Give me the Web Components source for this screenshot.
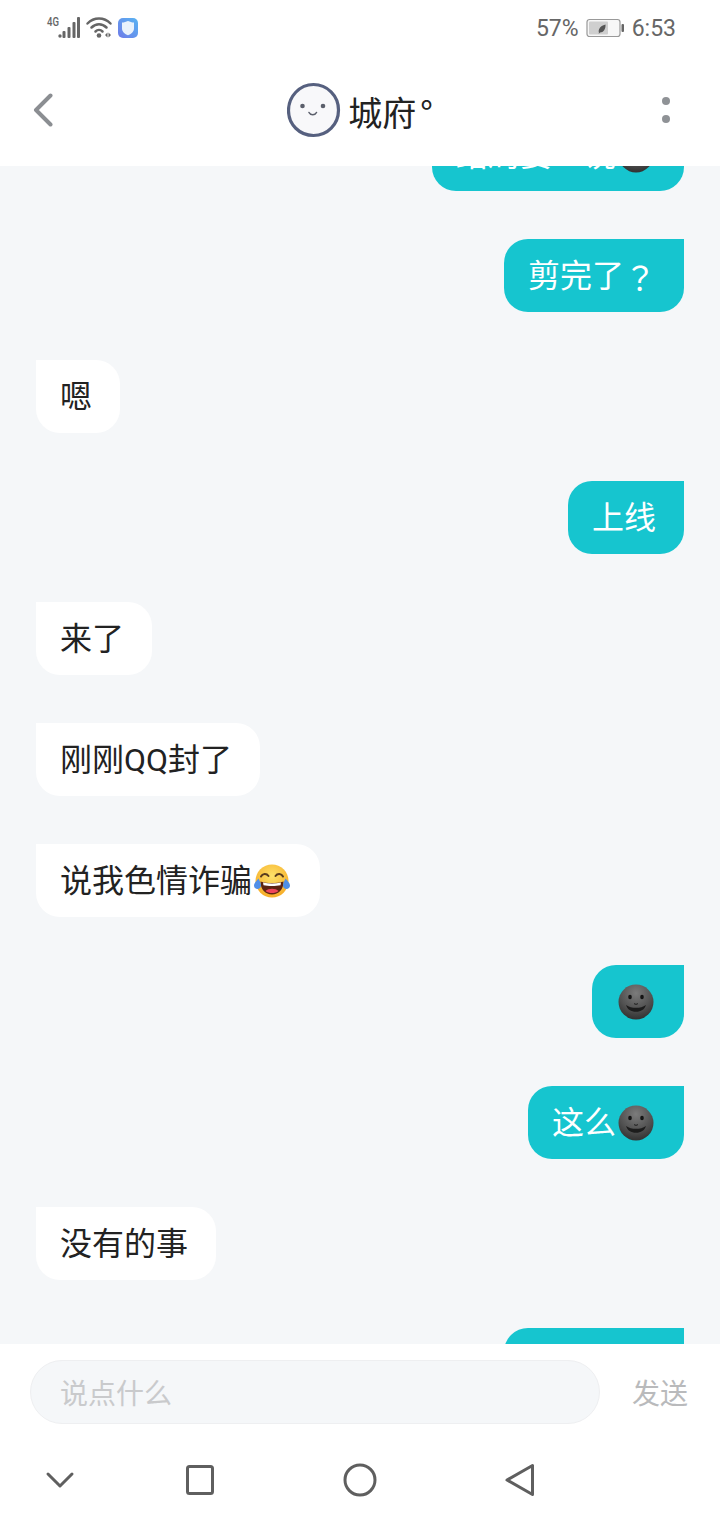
<!DOCTYPE html>
<html lang="zh-CN">
<head>
<meta charset="utf-8">
<title>城府°</title>
<style>
    html, body {
        margin: 0;
        padding: 0;
        height: 100%;
        background: #ffffff;
    }
    body {
        font-family: Roboto, "Noto Sans CJK SC", "Noto Sans", sans-serif;
    }
    chat-app {
        height: 1520px;
    }
    .tc {
        font-family: "Noto Sans CJK TC", sans-serif;
    }
    /* keeps the last bubble its width, its text is behind the input bar */
    .hidden-text {
        width: 128px;
    }
</style>
</head>
<body>

<chat-app>
    <status-bar slot="status"></status-bar>
    <chat-header slot="header" title="城府°"></chat-header>
    <chat-bubble side="me">结局要一说<chat-emoji kind="smile"></chat-emoji></chat-bubble>
    <chat-bubble side="me">剪完了<span class="tc">？</span></chat-bubble>
    <chat-bubble side="them">嗯</chat-bubble>
    <chat-bubble side="me">上线</chat-bubble>
    <chat-bubble side="them">来了</chat-bubble>
    <chat-bubble side="them">刚刚QQ封了</chat-bubble>
    <chat-bubble side="them">说我色情诈骗<chat-emoji kind="joy"></chat-emoji></chat-bubble>
    <chat-bubble side="me"><chat-emoji kind="smile"></chat-emoji></chat-bubble>
    <chat-bubble side="me">这么<chat-emoji kind="smile"></chat-emoji></chat-bubble>
    <chat-bubble side="them">没有的事</chat-bubble>
    <chat-bubble side="me"><span class="hidden-text"></span></chat-bubble>
    <chat-input slot="input"></chat-input>
    <nav-bar slot="nav"></nav-bar>
</chat-app>

<script>
class ChatApp extends HTMLElement {
    constructor() {
        super();
        this.attachShadow({mode: 'open'}).innerHTML = `
        <style>
            :host {
                display: flex;
                flex-direction: column;
                width: 720px;
                background: #ffffff;
                overflow: hidden;
            }
            .messages {
                flex: 1;
                min-height: 0;
                overflow: hidden;
                background: #f5f7f9;
            }
            /* the list is scrolled, first bubble is cut by the header */
            .list {
                display: flex;
                flex-direction: column;
                gap: 48px;
                margin-top: -48px;
            }
        </style>
        <slot name="status"></slot>
        <slot name="header"></slot>
        <div class="messages"><div class="list"><slot></slot></div></div>
        <slot name="input"></slot>
        <slot name="nav"></slot>
        `;
    }
}

class StatusBar extends HTMLElement {
    constructor() {
        super();
        this.attachShadow({mode: 'open'}).innerHTML = `
        <style>
            :host {
                display: flex;
                justify-content: space-between;
                align-items: center;
                height: 56px;
                padding: 0 44px 0 46px;
                color: #666666;
                font-family: Roboto, "Noto Sans", sans-serif;
                font-size: 23px;
            }
            .left, .right {
                display: flex;
                align-items: center;
            }
            svg {
                display: block;
            }
            .pct {
                margin-right: 7px;
            }
            .time {
                margin-left: 8px;
            }
        </style>
        <div class="left">
            <svg width="94" height="32" viewBox="0 -4 94 32">
                <text x="1" y="10" font-family="Roboto, sans-serif" font-size="12.500" font-weight="500" fill="#666" textLength="12" lengthAdjust="spacingAndGlyphs">4G</text>
                <g fill="#666">
                    <circle cx="14" cy="20" r="1.700"/>
                    <rect x="16.500" y="15" width="3" height="7" rx="1"/>
                    <rect x="21.500" y="11" width="3" height="11" rx="1"/>
                    <rect x="26.500" y="6" width="3" height="16" rx="1"/>
                    <rect x="31" y="1" width="3" height="21" rx="1"/>
                </g>
                <g fill="none" stroke="#666" stroke-width="2.500" stroke-linecap="round">
                    <path d="M41.500 7.500C48 .8 58 .8 64.500 7.500"/>
                    <path d="M45.500 11.500C50 7 56 7 60.500 11.500"/>
                    <path d="M49.500 15.500C51.500 13.500 54.500 13.500 56.500 15.500"/>
                </g>
                <circle cx="53" cy="19.500" r="2.300" fill="#666"/>
                <path d="M59 19l2.500-2.500v5zM62.500 16.500L65 19l-2.500 2.500z" fill="#666"/>
                <defs>
                    <linearGradient id="shield-bg" x1="0" y1="1" x2="1" y2="0">
                        <stop offset="0" stop-color="#6e7be8"/>
                        <stop offset="1" stop-color="#59b4f2"/>
                    </linearGradient>
                </defs>
                <rect x="72" y="2" width="20" height="20" rx="5" fill="url(#shield-bg)"/>
                <path d="M76 6.500c2.200 0 4-.6 6-1.500 2 .9 3.800 1.500 6 1.500v6c0 3.500-3 5.600-6 6.800-3-1.200-6-3.300-6-6.800z" fill="#e9f2fc"/>
            </svg>
        </div>
        <div class="right">
            <span class="pct">57%</span>
            <svg width="38" height="20" viewBox="0 0 38 20">
                <rect x="1" y="1.500" width="33" height="17" rx="2.500" fill="#f7f7f7" stroke="#999" stroke-width="1.200"/>
                <rect x="3" y="3.500" width="19" height="13" rx="1" fill="#cfcfcf"/>
                <path d="M13 15c-1-3 .5-7 6.500-8.500.3 4.500-2 8-5.500 8l-1.500 1.500z" fill="#555"/>
                <rect x="35.500" y="6" width="2.500" height="8" rx="1" fill="#666"/>
            </svg>
            <span class="time">6:53</span>
        </div>
        `;
    }
}

class ChatHeader extends HTMLElement {
    constructor() {
        super();
        let title = this.getAttribute('title').replace('°', '<span class="deg">°</span>');
        this.removeAttribute('title');
        this.attachShadow({mode: 'open'}).innerHTML = `
        <style>
            :host {
                display: flex;
                align-items: center;
                justify-content: space-between;
                height: 110px;
                padding: 0 49px 2px 33px;
                background: #ffffff;
                box-sizing: border-box;
            }
            svg {
                display: block;
            }
            .who {
                display: flex;
                align-items: center;
                gap: 7px;
                margin-left: 6px;
            }
            .name {
                font-size: 34px;
                line-height: 54px;
                margin-top: 4px;
                color: #222222;
                font-weight: 400;
                font-family: "Noto Sans CJK SC", sans-serif;
            }
            .deg {
                padding-left: 4px;
            }
        </style>
        <svg width="20" height="34" viewBox="0 0 20 34">
            <path d="M17.500 2.500L3 17l14.500 14.500" fill="none" stroke="#8b8e92" stroke-width="4" stroke-linecap="round" stroke-linejoin="round"/>
        </svg>
        <div class="who">
            <svg width="54" height="56" viewBox="0 0 54 56">
                <path d="M26.500 2.500C40 2.500 51.500 13.500 51.500 28S40.500 53.500 26.500 53.500 1.500 42.500 1.500 28.500 12.500 2.500 26.500 2.500z" fill="#f8f8fa" stroke="#56607f" stroke-width="3.200"/>
                <circle cx="15.500" cy="24" r="2.300" fill="#5b5f6b"/>
                <circle cx="36" cy="24" r="2.300" fill="#5b5f6b"/>
                <path d="M22 30.500c1.500 3 6 3 7.500 0" fill="none" stroke="#5b5f6b" stroke-width="1.600" stroke-linecap="round"/>
            </svg>
            <span class="name">${title}</span>
        </div>
        <svg width="10" height="28" viewBox="0 0 10 28">
            <circle cx="5" cy="5" r="4" fill="#8f9296"/>
            <circle cx="5" cy="23" r="4" fill="#8f9296"/>
        </svg>
        `;
    }
}

class ChatBubble extends HTMLElement {
    constructor() {
        super();
        let me = this.getAttribute('side') === 'me';
        this.attachShadow({mode: 'open'}).innerHTML = `
        <style>
            :host {
                display: flex;
                justify-content: ${me ? 'flex-end' : 'flex-start'};
                padding: 0 36px;
            }
            .bubble {
                display: flex;
                align-items: center;
                height: 73px;
                padding: 0 28px 0 24px;
                box-sizing: border-box;
                font-size: 32px;
                line-height: 46px;
                white-space: nowrap;
                border-radius: ${me ? '24px 0 24px 24px' : '0 24px 24px 24px'};
                background: ${me ? '#16c5cf' : '#ffffff'};
                color: ${me ? '#ffffff' : '#222222'};
            }
        </style>
        <div class="bubble"><slot></slot></div>
        `;
    }
}

class ChatEmoji extends HTMLElement {
    constructor() {
        super();
        let joy = this.getAttribute('kind') === 'joy';
        let art = joy ? `
            <defs>
                <radialGradient id="joy-face" cx="0.5" cy="0.35" r="0.7">
                    <stop offset="0" stop-color="#fde26a"/>
                    <stop offset="1" stop-color="#f6a821"/>
                </radialGradient>
            </defs>
            <circle cx="20" cy="20" r="16.500" fill="url(#joy-face)"/>
            <path d="M9 15.500c1.500-3 5.500-3.500 7.500-.5M23.500 15c2-3 6-2.500 7.500.5" fill="none" stroke="#5a3c1e" stroke-width="2" stroke-linecap="round"/>
            <path d="M8.500 20.500c7 2 16 2 23 0 0 8-5 13-11.500 13s-11.500-5-11.500-13z" fill="#5d2413"/>
            <path d="M11 21.500c5.500 1.200 12.500 1.200 18 0l-.5 2.800c-5 1-12 1-17 0z" fill="#ffffff"/>
            <path d="M13.500 30c3-3 10-3 13 0-3.500 2.800-9.500 2.800-13 0z" fill="#f0465a"/>
            <path d="M6.500 17.500c-2 2.500-4.500 4.500-4.500 7 0 2 1.600 3.500 3.500 3.500s3.500-1.500 3.500-3.500c0-2.500-1.500-4.500-2.500-7z" fill="#4f8fe8"/>
            <path d="M33.500 17.500c2 2.500 4.500 4.500 4.500 7 0 2-1.600 3.500-3.500 3.500s-3.500-1.500-3.500-3.500c0-2.500 1.500-4.500 2.500-7z" fill="#4f8fe8"/>
        ` : `
            <defs>
                <radialGradient id="dark-face" cx="0.5" cy="0.25" r="0.8">
                    <stop offset="0" stop-color="#7c7c7c"/>
                    <stop offset="0.6" stop-color="#505050"/>
                    <stop offset="1" stop-color="#2c2c2c"/>
                </radialGradient>
            </defs>
            <circle cx="20" cy="20" r="17.500" fill="url(#dark-face)"/>
            <ellipse cx="14" cy="15" rx="1.800" ry="2.300" fill="#141414"/>
            <ellipse cx="26" cy="15" rx="1.800" ry="2.300" fill="#141414"/>
            <path d="M10 23c3 2 6 2.800 10 2.800s7-.8 10-2.800c-1.500 4.500-5 6.800-10 6.800s-8.500-2.300-10-6.800z" fill="#1c1c1c"/>
            <path d="M18 21.500c1 1 3 1 4 0" fill="none" stroke="#1c1c1c" stroke-width="1"/>
        `;
        this.attachShadow({mode: 'open'}).innerHTML = `
        <style>
            :host {
                display: block;
                width: 40px;
                height: 40px;
            }
            svg {
                display: block;
            }
        </style>
        <svg width="40" height="40" viewBox="0 0 40 40">${art}</svg>
        `;
    }
}

class ChatInput extends HTMLElement {
    constructor() {
        super();
        this.attachShadow({mode: 'open'}).innerHTML = `
        <style>
            :host {
                display: flex;
                align-items: center;
                justify-content: space-between;
                height: 96px;
                padding: 0 32px 0 30px;
                background: #ffffff;
            }
            .field {
                box-sizing: border-box;
                width: 570px;
                height: 64px;
                padding: 0 29px;
                display: flex;
                align-items: center;
                border: 1px solid #eeeff1;
                border-radius: 32px;
                background: #f5f7f9;
                color: #c9cacc;
                font-size: 28px;
                font-family: "Noto Sans CJK SC", sans-serif;
            }
            .send {
                font-size: 28px;
                color: #b9babc;
                font-family: "Noto Sans CJK SC", sans-serif;
            }
        </style>
        <div class="field">说点什么</div>
        <div class="send">发送</div>
        `;
    }
}

class NavBar extends HTMLElement {
    constructor() {
        super();
        this.attachShadow({mode: 'open'}).innerHTML = `
        <style>
            :host {
                display: flex;
                gap: 120px;
                align-items: center;
                height: 80px;
                padding: 0 0 0 40px;
                background: #ffffff;
            }
            svg {
                display: block;
            }
            .chevron {
                margin-right: -20px;
            }
        </style>
        <svg class="chevron" width="40" height="40" viewBox="0 0 40 40"><path d="M8 14l12 12 12-12" fill="none" stroke="#5f5f5f" stroke-width="3" stroke-linecap="round" stroke-linejoin="round"/></svg>
        <svg width="40" height="40" viewBox="0 0 40 40"><rect x="7.500" y="6.500" width="25" height="27" rx="2" fill="none" stroke="#5f5f5f" stroke-width="3"/></svg>
        <svg width="40" height="40" viewBox="0 0 40 40"><circle cx="20" cy="20" r="15" fill="none" stroke="#5f5f5f" stroke-width="3"/></svg>
        <svg width="40" height="40" viewBox="0 0 40 40"><path d="M32.500 5.500v29L7 20z" fill="none" stroke="#5f5f5f" stroke-width="3" stroke-linejoin="round"/></svg>
        `;
    }
}

customElements.define('chat-app', ChatApp);
customElements.define('status-bar', StatusBar);
customElements.define('chat-header', ChatHeader);
customElements.define('chat-bubble', ChatBubble);
customElements.define('chat-emoji', ChatEmoji);
customElements.define('chat-input', ChatInput);
customElements.define('nav-bar', NavBar);
</script>
</body>
</html>
